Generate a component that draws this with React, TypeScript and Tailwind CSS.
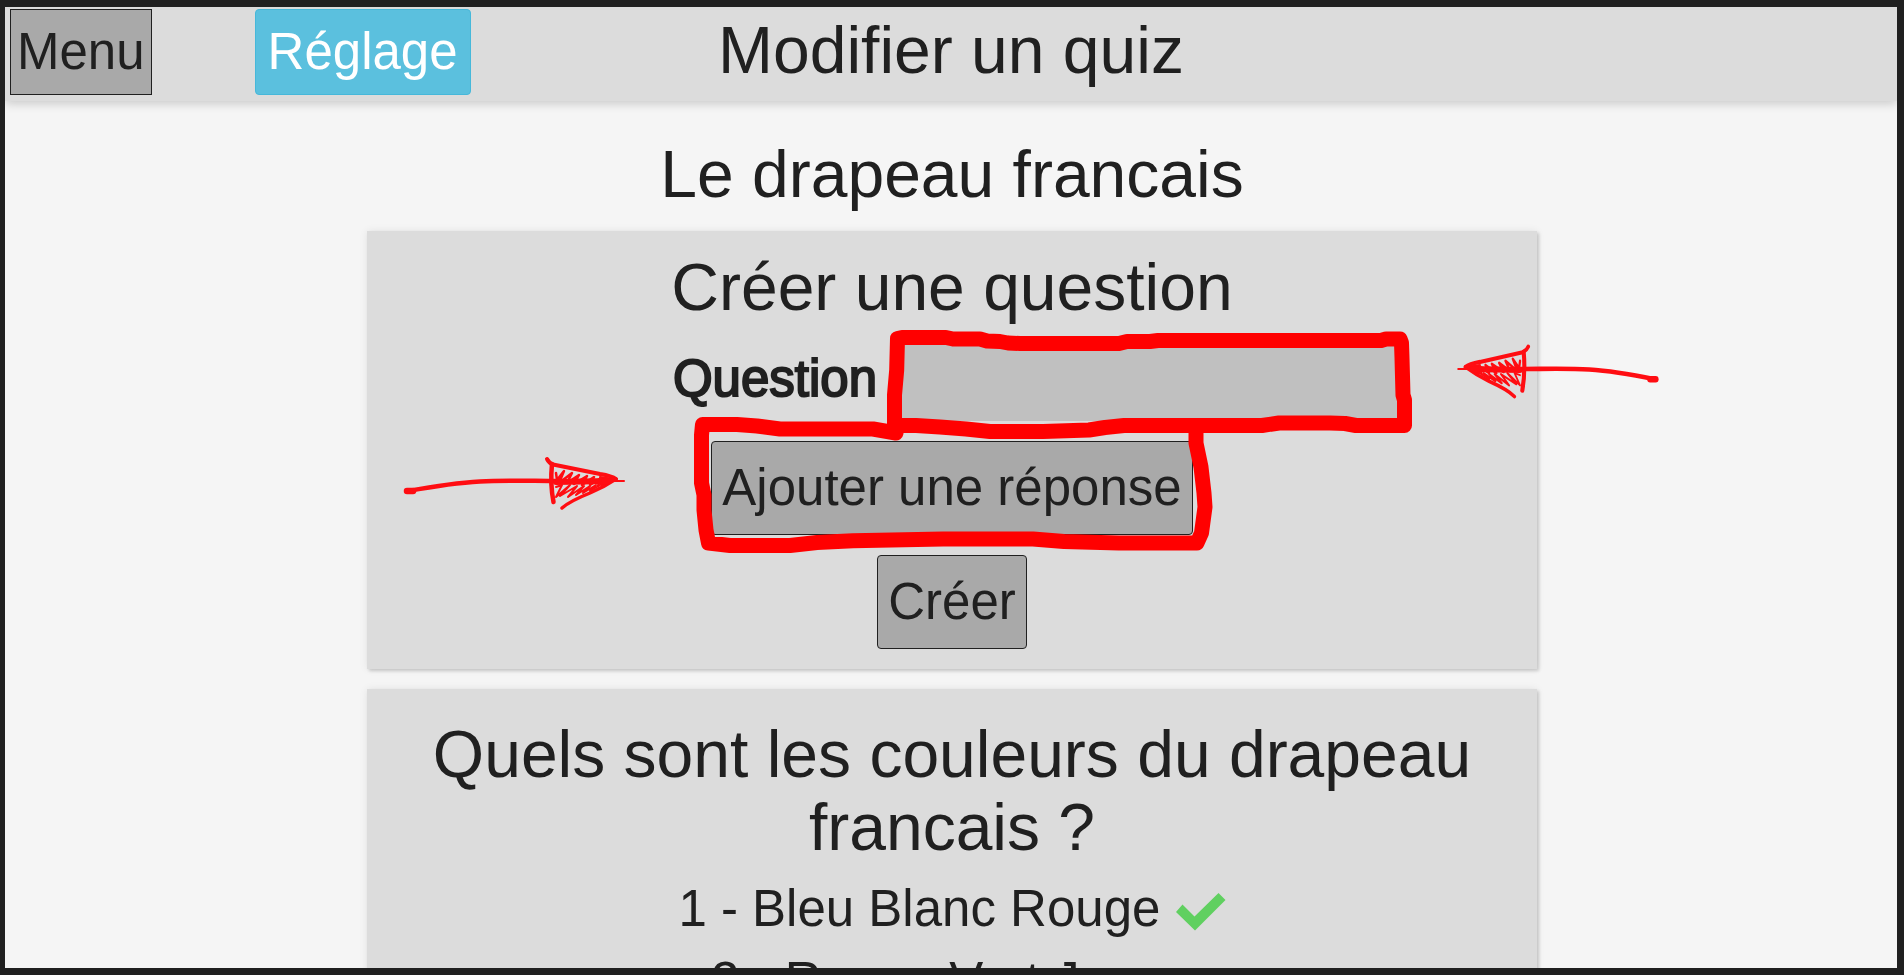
const buttonBase = "border text-[51px] leading-[72px]";
const neutral = "border-[#202020] bg-[#a9a9a9]";
const cardStyle =
  "bg-[#dcdcdc] text-center shadow-[2px_2px_3px_rgba(0,0,0,0.16),0_0_8px_rgba(0,0,0,0.08)]";
const heading = "text-[66px] leading-[73px]";

function Arrow({ transform }: { transform?: string }) {
  return (
    <g transform={transform} stroke="#ff0d12" fill="none" strokeLinecap="round" strokeLinejoin="round">
      <path d="M407 491 L413 491" strokeWidth="6.5" />
      <path d="M408 491 C430 487 452 483 480 481.500 C505 480 530 481 560 481" strokeWidth="4.500" />
      <path d="M547 459 Q549 463 553 464.500 Q580 470 600 474 Q612 476 616 479" strokeWidth="4" />
      <path d="M552 464 Q550 484 553.500 502" strokeWidth="4.500" />
      <path d="M616 479 Q604 487 590 493 Q570 501 562 508" strokeWidth="3.500" />
      <path d="M608 481 L624 481" strokeWidth="2" />
      <path d="M600 477 L614 479 L602 486 Z" fill="#ff0d12" strokeWidth="2" />
      <path d="M556 482 L608 481" strokeWidth="6" />
      <path
        d="M556 473 L557 480 L564 471 L559 483 L572 473 L567 483 L579 475 L574 484 L587 476 L582 485 L594 477 L590 485 L601 478 L598 486"
        strokeWidth="2.500"
      />
      <path
        d="M556 487 L562 485 L556 497 L570 485 L560 496 L577 486 L568 497 L584 486 L576 495 L590 486 L583 493 L596 485 L590 491 L602 484"
        strokeWidth="2"
      />
    </g>
  );
}

function Annotations() {
  return (
    <svg
      aria-hidden="true"
      viewBox="367 231 1170 438"
      className="pointer-events-none absolute inset-0 size-full overflow-visible"
    >
      <g fill="none" stroke="#ff0000" strokeWidth="15" strokeLinecap="round" strokeLinejoin="round">
        <path d="M897.5 338.500 L902 337.500 L946 337.500 L953 339 L980 339 L987 341 L1000 341.500 L1008 343 L1020 343.500 L1119 343.500 L1127 341.500 L1150 341.500 L1158 340.500 L1381 340.500 L1386 339 L1400 339 L1401.500 343 L1402 358 L1403 395 L1404.500 400 L1404.500 425.500 L1356 425.500 L1345 423.500 L1330 423 L1279 423 L1262 425.500 L1124 425.500 L1105 427.500 L1089 430 L1043 431.500 L990 431.500 L966 429 L940 427 L916 425.500 L894.500 425.500 L894.500 395 L896.700 370 Z" />
        <path d="M896 433 L873 429 L780 429 L757 426 L737 424.500 L702.500 424.500 L701.500 435 L701.500 483 L704 495 L704 510 L706 530 L708.500 543 L730 545.500 L790 545.500 L817 542.500 L853 540.700 L943 539 L1033 539 L1064 541.500 L1119 543 L1197 543 L1201.500 533 L1205 507 L1204 493 L1201 467 L1196 443 L1196 431" />
      </g>
      <Arrow />
      <Arrow transform="translate(2026 -121.6) scale(-0.91 1.02)" />
    </svg>
  );
}

function CheckIcon() {
  return (
    <svg viewBox="0 0 51 51" className="inline-block size-[51px] align-[-12px]" role="img" aria-label="Bonne réponse">
      <polygon points="1,25 7.500,17.500 19.500,29.500 43.500,6 50.500,13 20,43.500" fill="#60d060" />
    </svg>
  );
}

export default function App() {
  return (
    <div className="h-screen overflow-hidden border-y-[7px] border-r-[7px] border-l-[5px] border-[#202020] bg-[#f5f5f5] font-['Liberation_Sans',Arial,sans-serif] text-[51px] leading-[72px] text-[#202020]">
      <header className="grid grid-cols-[1fr_auto_1fr] items-start bg-[#dcdcdc] px-[5px] pt-0.5 pb-1.5 shadow-[0_2px_10px_rgba(0,0,0,0.2)]">
        <div className="flex gap-[103px]">
          <button type="button" className={`${buttonBase} ${neutral} px-1.5 py-1.5`}>
            Menu
          </button>
          <button
            type="button"
            className={`${buttonBase} rounded-[4px] border-[#46b8da] bg-[#5bc0de] px-3 py-1.5 text-white`}
          >
            Réglage
          </button>
        </div>
        <h1 className={`${heading} mt-[5px]`}>Modifier un quiz</h1>
      </header>

      <main className="mx-auto flex max-w-[1172px] flex-col gap-5 pl-0.5">
        <h2 className={`${heading} mt-[37px] text-center`}>Le drapeau francais</h2>

        <section className={`${cardStyle} relative`}>
          <form className="flex flex-col items-center gap-5 py-5">
            <h3 className={heading}>Créer une question</h3>
            <div className="-mt-[7px] flex w-full items-center gap-[15px]">
              <label htmlFor="question" className="flex-1 text-right [-webkit-text-stroke:2px_#202020]">
                Question
              </label>
              <input id="question" type="text" className="mr-[135px] h-[84px] w-[510px] bg-[#c0c0c0] px-3 outline-none" />
            </div>
            <button type="button" className={`${buttonBase} ${neutral} rounded-[4px] p-2.5`}>
              Ajouter une réponse
            </button>
            <button type="submit" className={`${buttonBase} ${neutral} rounded-[4px] p-2.5`}>
              Créer
            </button>
          </form>
          <Annotations />
        </section>

        <section className={`${cardStyle} px-4 pt-[29px] pb-5`}>
          <h3 className={heading}>Quels sont les couleurs du drapeau francais ?</h3>
          <ul className="mt-[9px]">
            <li className="h-[72px]">
              1 - Bleu Blanc Rouge <CheckIcon />
            </li>
            <li>2 - Rouge Vert Jaune</li>
          </ul>
        </section>
      </main>
    </div>
  );
}
